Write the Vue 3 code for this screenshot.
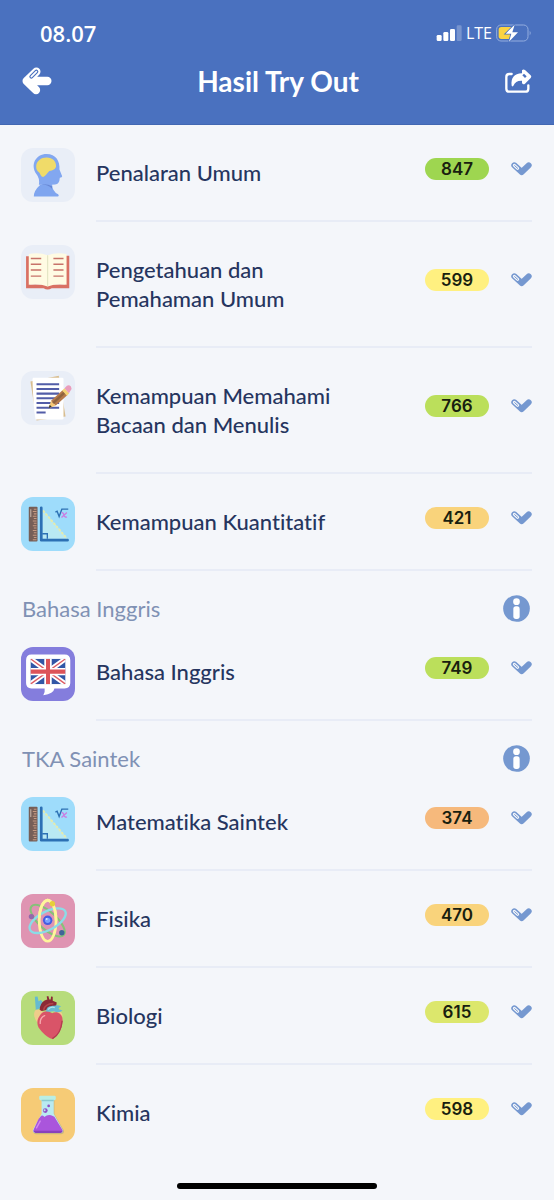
<script setup>
import { ref } from "vue";

let sections = ref([
  {
    id: 1,
    title: "",
    subjects: [
      { id: 1, name: "Penalaran Umum", score: 847, icon: "head", level: "great" },
      { id: 2, name: "Pengetahuan dan Pemahaman Umum", score: 599, icon: "book", level: "fair" },
      { id: 3, name: "Kemampuan Memahami Bacaan dan Menulis", score: 766, icon: "paper", level: "good" },
      { id: 4, name: "Kemampuan Kuantitatif", score: 421, icon: "math", level: "low" },
    ],
  },
  {
    id: 2,
    title: "Bahasa Inggris",
    subjects: [
      { id: 5, name: "Bahasa Inggris", score: 749, icon: "english", level: "good" },
    ],
  },
  {
    id: 3,
    title: "TKA Saintek",
    subjects: [
      { id: 6, name: "Matematika Saintek", score: 374, icon: "math", level: "poor" },
      { id: 7, name: "Fisika", score: 470, icon: "atom", level: "low" },
      { id: 8, name: "Biologi", score: 615, icon: "heart", level: "okay" },
      { id: 9, name: "Kimia", score: 598, icon: "flask", level: "fair" },
    ],
  },
]);

let opened = ref(0);

// remember which subject is selected
function toggle(id) {
  opened.value = opened.value == id ? 0 : id;
}
</script>

<template>
  <div class="page">
    <header class="header">
      <div class="status">
        <span class="time">08.07</span>
        <div class="signal">
          <svg width="26" height="18" viewBox="0 0 78 54" aria-hidden="true">
            <g fill="#fff">
              <rect x="2" y="33" width="15" height="18" rx="4" />
              <rect x="22" y="24" width="15" height="27" rx="4" />
              <rect x="42" y="15" width="15" height="36" rx="4" />
              <rect x="62" y="4" width="15" height="47" rx="4" opacity="0.25" />
            </g>
          </svg>
          <span class="network">LTE</span>
          <svg width="36" height="18" viewBox="0 0 108 54" aria-hidden="true">
            <rect x="2" y="3" width="94" height="48" rx="13" fill="none" stroke="#94aedf" stroke-width="3" />
            <path d="M101 20q6 7 0 14z" fill="#94aedf" />
            <path d="M16 9h29v36H16q-8 0-8-8V17q0-8 8-8z" fill="#fbd342" />
            <path d="M56 2 29 29h17l-7 24 27-28H49z" fill="#fff" stroke="#4a71bf" stroke-width="5" paint-order="stroke" />
          </svg>
        </div>
      </div>
      <div class="bar">
        <button class="icon-button" type="button" aria-label="Kembali">
          <svg width="30" height="28" viewBox="0 0 90 84" aria-hidden="true">
            <path d="M43 14 14 42l28 27M18 42h58" fill="none" stroke="#fff" stroke-width="25" stroke-linecap="round" stroke-linejoin="round" />
            <path d="M43 14 28 29" fill="none" stroke="#4a71bf" stroke-width="12" stroke-linecap="round" />
            <path d="M43 14 28 29" fill="none" stroke="#fff" stroke-width="5" stroke-linecap="round" />
          </svg>
        </button>
        <h1>Hasil Try Out</h1>
        <button class="icon-button" type="button" aria-label="Bagikan">
          <svg width="28" height="26" viewBox="0 0 84 78" aria-hidden="true">
            <path d="M23 18h-7q-9 0-9 9v35q0 9 9 9h48q9 0 9-9V52" fill="none" stroke="#fff" stroke-width="7" stroke-linecap="round" />
            <path d="M54 7q4-5 9-1l17 16q4 4 0 8L63 47q-6 4-9-2v-7q-20-1-25 14-2 6-6 1-5-35 31-37z" fill="#fff" />
            <path d="m60 17 8 8-5 5-8-8z" fill="#4a71bf" />
          </svg>
        </button>
      </div>
    </header>

    <main>
      <section v-for="section in sections" :key="section.id">
        <div v-if="section.title" class="section-head">
          <h2>{{ section.title }}</h2>
          <button class="icon-button" type="button" :aria-label="'Info ' + section.title">
            <svg width="27" height="27" viewBox="0 0 81 81" aria-hidden="true">
              <circle cx="40.5" cy="40.5" r="40" fill="#7598d0" />
              <circle cx="40.5" cy="20" r="10" fill="#fff" />
              <rect x="31" y="34" width="19" height="38" rx="8" fill="#fff" />
            </svg>
          </button>
        </div>
        <ul>
          <li v-for="subject in section.subjects" :key="subject.id" class="row">
            <svg class="tile" :class="'tile-' + subject.icon" viewBox="0 0 160 160" aria-hidden="true">
              <g v-if="subject.icon == 'head'">
                <path d="M38 144q-1-17 20-36h34q1 21 18 29 4 4 0 7z" fill="#7fa5ef" />
                <path d="M53 109q3-19-7-31C26 50 44 18 76 18c27 0 40 21 38 46l8 20q0 4-7 4-1 19-14 20l-10 1v8q-18-10-38-8z" fill="#82a7f0" />
                <path d="M53 109q22-5 39 4v8q-15-15-39-12z" fill="#6787d4" />
                <path d="M45 55c0-17 15-27 31-27 18 0 28 11 28 25-1 10-10 13-20 15-6 6-10 14-18 18-9-2-8-12-15-16-5-4-6-9-6-15z" fill="#f0db69" />
              </g>
              <g v-else-if="subject.icon == 'book'">
                <path d="M15 33h12v84h40l12 4 12-4h39V32h13v96H91q-12 8-24 0H15z" fill="#d97063" />
                <path d="M23 27q29-6 56 3 27-9 56-3v91q-30-5-56 5-27-10-56-5z" fill="#fffbe3" />
                <path d="M79 30v92" stroke="#dfe2bf" stroke-width="3" />
                <path d="M29 40h31M29 57h31M29 74h31M29 92h31M96 40h30M96 57h30M96 74h30M96 92h30" stroke="#c7736a" stroke-width="4" />
              </g>
              <g v-else-if="subject.icon == 'paper'">
                <path d="M28 31 112 14l20 121-86 12z" fill="#d8bd8f" />
                <path d="M36 20h86q4 0 4 4v116q0 4-4 4H43q-7-40-9-120z" fill="#fff" />
                <path d="M46 39h67M46 53h67M46 67h67M46 81h67M46 95h67M46 109h67M46 123h27" stroke="#525da8" stroke-width="6" />
                <path d="m82 110 7-22 14 14z" fill="#f7c875" />
                <path d="m82 110 3-10 6 6z" fill="#333" />
                <path d="m89 88 34-31 14 15-34 30z" fill="#b6794b" />
                <path d="m93 92 34-31 5 5-34 31z" fill="#8e633f" />
                <path d="m122 58 7-7 14 15-7 7z" fill="#f4d275" />
                <path d="m129 51 7-7q6-4 12 2 4 7-1 12l-5 8z" fill="#ea9dbc" />
              </g>
              <g v-else-if="subject.icon == 'math'">
                <rect x="23" y="29" width="26" height="103" rx="3" fill="#765f58" />
                <path d="M38 36h8M35 43h11M38 50h8M35 57h11M38 64h8M35 71h11M38 78h8M35 85h11M38 92h8M35 99h11M38 106h8M35 113h11M38 120h8M35 127h11" stroke="#c69a81" stroke-width="3" />
                <path d="M29 36v23" stroke="#c7b5aa" stroke-width="3" />
                <path d="M64 36 138 124H64z" fill="#b9e9f3" />
                <path d="m65 40 71 83" stroke="#e5ebad" stroke-width="6" stroke-dasharray="8 4" />
                <path d="M60 32v96h78" fill="none" stroke="#2c70b4" stroke-width="8" stroke-linecap="round" stroke-linejoin="round" />
                <path d="M63 109h15v15M102 45l5-3 6 16 8-22h19" fill="none" stroke="#2c70b4" stroke-width="4" />
                <path d="M120 47q5-2 7 6 3 9 9 6m0-13-16 15" fill="none" stroke="#cb7ce0" stroke-width="4" />
              </g>
              <g v-else-if="subject.icon == 'english'">
                <path d="M31 22h98q17 0 17 17v68q0 16-17 16H99q-2 15-33 20 6-8 4-20H31q-16 0-16-16V39q0-17 16-17z" fill="#fff" />
                <svg x="28" y="35" width="104" height="75" viewBox="0 0 104 75">
                  <rect width="104" height="75" rx="4" fill="#3156a6" />
                  <path d="m0 0 104 75M104 0 0 75" stroke="#fff" stroke-width="15" />
                  <path d="m0 0 104 75M104 0 0 75" stroke="#dd5c63" stroke-width="4" />
                  <path d="M52 0v75M0 38h104" stroke="#fff" stroke-width="22" />
                  <path d="M52 0v75M0 38h104" stroke="#dc5359" stroke-width="12" />
                </svg>
              </g>
              <g v-else-if="subject.icon == 'atom'" fill="none">
                <ellipse cx="79" cy="79" rx="64" ry="26" transform="rotate(42 79 79)" stroke="#85c278" stroke-width="6" />
                <ellipse cx="79" cy="79" rx="25" ry="61" stroke="#fff59b" stroke-width="8" />
                <ellipse cx="79" cy="79" rx="59" ry="27" transform="rotate(-28 79 79)" stroke="#8bdce7" stroke-width="7" />
                <path d="M54 71q3-45 25-53 23 6 25 61" stroke="#fff59b" stroke-width="8" />
                <circle cx="79" cy="78" r="14" fill="#435de1" />
                <circle cx="79" cy="78" r="8" fill="#7ba2ff" />
                <circle cx="76" cy="74" r="3" fill="#d4e4ff" />
                <circle cx="93" cy="29" r="8" fill="#e7cf39" />
                <circle cx="31" cy="67" r="8" fill="#9367ab" />
                <circle cx="121" cy="115" r="8" fill="#3f6598" />
              </g>
              <g v-else-if="subject.icon == 'heart'">
                <path d="m41 17 8-1 3 14 7-3 6 6-8 17-13 8z" fill="#65bad1" />
                <path d="M56 48q4-18 22-23l-2-9 5-1 3 10h4l1-9 5 1v12l12 5-3 16-48 11z" fill="#8b2936" />
                <path d="M67 56q4-18 29-19" fill="none" stroke="#b54449" stroke-width="5" />
                <path d="M46 55q16 0 21 12l-16 29Q37 81 39 66q1-9 7-11zM96 59q25-3 27 12l-2 15z" fill="#efcc8a" />
                <path d="M73 63q2-21 25-19 10-5 21 2-11 4-6 9l10 2q-8 10-27 3z" fill="#68bbd3" />
                <path d="M80 55q8-10 20-6" fill="none" stroke="#b3e5ec" stroke-width="4" />
                <path d="M59 68c10-11 26-7 33-2 16-9 33 3 31 23-1 29-19 49-29 53-15-3-32-20-42-34-8-17-1-30 7-40z" fill="#d95468" />
                <path d="M93 141q25-13 29-53" fill="none" stroke="#b33c50" stroke-width="4" />
                <path d="M57 96q-1-17 13-23" fill="none" stroke="#f7a8ad" stroke-width="4" stroke-linecap="round" />
              </g>
              <g v-else-if="subject.icon == 'flask'">
                <path d="M63 35h36v43l27 46q5 12-7 13H44q-12-3-7-14l26-45z" fill="#929e87" opacity="0.45" />
                <path d="M61 33h36v43l26 47q4 9-6 10H42q-10-2-6-11l25-46z" fill="#b9eaf1" />
                <rect x="54" y="23" width="49" height="13" rx="4" fill="#b9eee4" />
                <path d="M61 37h36" stroke="#8acbd1" stroke-width="4" />
                <path d="m52 92 8-10q7-2 9 4 10-8 20-5l10 4 23 38q4 8-5 9H43q-9-1-5-10z" fill="#aa55dc" />
                <path d="M37 127h86q0 6-6 6H43q-6-1-6-6z" fill="#8841bb" />
                <circle cx="72" cy="67" r="7" fill="#8e51c7" />
                <circle cx="70" cy="66" r="3" fill="#b9eaf1" />
                <circle cx="82" cy="53" r="4" fill="#8e51c7" />
                <path d="m57 98-11 20" stroke="#d28af0" stroke-width="4" stroke-linecap="round" />
              </g>
            </svg>
            <div class="content">
              <h3>{{ subject.name }}</h3>
              <div class="result">
                <span class="score" :class="subject.level">{{ subject.score }}</span>
                <button
                  class="icon-button"
                  type="button"
                  :aria-label="'Detail ' + subject.name"
                  :aria-pressed="opened == subject.id"
                  @click.prevent="toggle(subject.id)"
                >
                  <svg width="21" height="14" viewBox="0 0 63 42" aria-hidden="true">
                    <path d="m10 10 22 20 21-20" fill="none" stroke="#7598d0" stroke-width="18" stroke-linecap="round" stroke-linejoin="round" />
                    <path d="m10 10 10 9" stroke="#f4f6fa" stroke-width="9" stroke-linecap="round" />
                    <path d="m11 11 9 8" stroke="#7598d0" stroke-width="3" stroke-linecap="round" />
                  </svg>
                </button>
              </div>
            </div>
          </li>
        </ul>
      </section>
    </main>

    <footer class="footer">
      <span class="home"></span>
    </footer>
  </div>
</template>

<style>
body {
  background: #f4f6fa;
}
</style>

<style scoped>
.page {
  display: flex;
  flex-direction: column;
  min-height: 100vh;
  background: #f4f6fa;
  color: #26355f;
  font-family: Lato, "Open Sans", sans-serif;
  font-variant-ligatures: none;
}

h1,
h2,
h3,
ul {
  margin: 0;
  padding: 0;
}

.icon-button {
  display: flex;
  padding: 0;
  border: 0;
  background: none;
  cursor: pointer;
}

.header {
  background: #4a71bf;
  color: #fff;
  padding: 18px 22px;
  border-bottom: 1px solid #4267b2;
}

.status {
  display: flex;
  justify-content: space-between;
  align-items: center;
  height: 30px;
  padding-left: 18px;
}

.time {
  font: 600 22px/30px "Open Sans", sans-serif;
}

.signal {
  display: flex;
  align-items: center;
  gap: 4px;
}

.network {
  font: 500 16px/30px "Open Sans", sans-serif;
}

.bar {
  display: flex;
  justify-content: space-between;
  align-items: center;
  height: 50px;
  padding-top: 8px;
}

h1 {
  font-size: 28px;
  line-height: 36px;
  font-weight: 700;
}

.section-head {
  display: flex;
  justify-content: space-between;
  align-items: center;
  padding: 23px 24px 1px 22px;
}

h2 {
  color: #8091b4;
  font-size: 22px;
  line-height: 29px;
  font-weight: 400;
}

ul {
  list-style: none;
}

.row {
  display: flex;
  align-items: flex-start;
  gap: 21px;
  padding: 0 22px 0 21px;
}

.tile {
  flex: none;
  width: 54px;
  height: 54px;
  margin-top: 23px;
  border-radius: 12px;
  background: #e9eef7;
}

.tile-math {
  background: #9edcfb;
}
.tile-english {
  background: #847ddd;
}
.tile-atom {
  background: #df94b2;
}
.tile-heart {
  background: #b7dc7b;
}
.tile-flask {
  background: #f6cb76;
}

.content {
  flex: 1;
  display: flex;
  justify-content: space-between;
  align-items: center;
  border-bottom: 2px solid #e8ecf6;
}

section:last-child .row:last-child .content {
  border-color: transparent;
}

h3 {
  max-width: 270px;
  padding: 33px 0;
  font-size: 22px;
  line-height: 29px;
  font-weight: 500;
}

.result {
  display: flex;
  align-items: center;
  gap: 22px;
  padding-bottom: 8px;
}

.score {
  box-sizing: border-box;
  width: 64px;
  padding-top: 1px;
  border-radius: 11px;
  color: #18200f;
  font: 600 17px/21px Inter, sans-serif;
  text-align: center;
}

.great {
  background: #9ed650;
}
.good {
  background: #bbdf5b;
}
.okay {
  background: #dce76c;
}
.fair {
  background: #fff080;
}
.low {
  background: #f9d37b;
}
.poor {
  background: #f6b97c;
}

.footer {
  display: flex;
  justify-content: center;
  margin-top: auto;
  padding-bottom: 11px;
}

.home {
  width: 36%;
  height: 6px;
  border-radius: 3px;
  background: #000;
}
</style>
